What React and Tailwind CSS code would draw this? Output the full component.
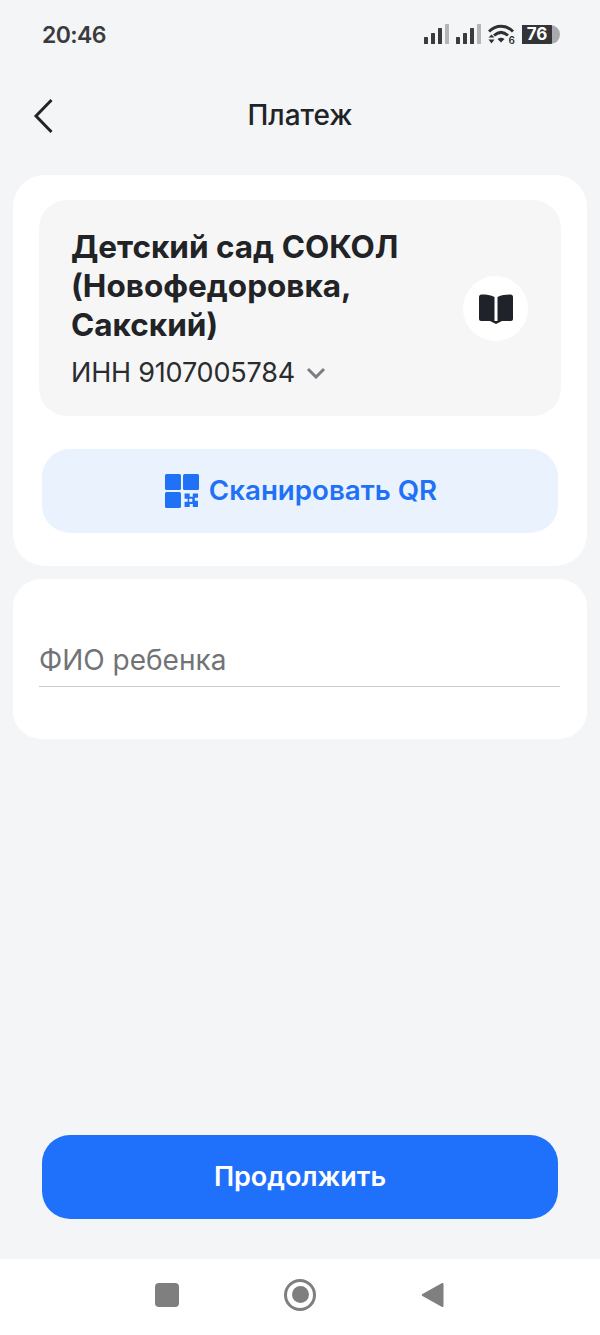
const font = { fontFamily: 'Inter, "Noto Sans", sans-serif' }

const SignalIcon = () => (
  <svg width="25" height="20" viewBox="0 0 25 20">
    <rect x="0" y="13" width="4" height="7" rx="0.5" fill="#3a3b3e" />
    <rect x="7" y="9" width="4" height="11" rx="0.5" fill="#3a3b3e" />
    <rect x="14" y="4" width="4" height="16" rx="0.5" fill="#3a3b3e" />
    <rect x="21" y="0" width="4" height="20" rx="0.5" fill="#b4b5b8" />
  </svg>
)

const WifiIcon = () => (
  <svg width="27" height="20" viewBox="0 0 27 20">
    <path d="M1 7.500C8 .5 18 .5 25 7.500" fill="none" stroke="#2f3033" strokeWidth="3" />
    <path d="M6 11.500C10.500 7.500 15.500 7.500 20 11.500" fill="none" stroke="#2f3033" strokeWidth="3" />
    <path d="M9.500 15C12 13.300 14 13.300 16.500 15L13 18.500Z" fill="#2f3033" />
    <path d="M3.500 10.500L6.500 13.500H.5ZM3.500 19.500L.5 15.500H6.500Z" fill="#2f3033" />
    <text x="20.500" y="19.500" fontSize="10" fontWeight="600" fill="#2f3033" style={font}>6</text>
  </svg>
)

const BatteryIcon = () => (
  <div className="w-[38px] h-[19px] rounded-l-[6px] rounded-r-full bg-[#a9aaad] overflow-hidden flex">
    <div className="w-[30px] bg-[#333437] flex items-center justify-center text-white text-[17px] font-bold leading-none">
      76
    </div>
  </div>
)

const QrIcon = () => (
  <svg width="34" height="34" viewBox="0 0 33 33" fill="#1f71f5">
    <rect x="0" y="0" width="15.500" height="15.500" rx="1.500" />
    <rect x="17.500" y="0" width="15.500" height="15.500" rx="1.500" />
    <rect x="0" y="17.500" width="15.500" height="15.500" rx="1.500" />
    <path d="M19 19h5v3h3v-3h5v4h-3v3h3v6h-5v-3h-3v3h-5v-5h3v-3h-3Z" />
    <rect x="23.500" y="24" width="3" height="3" fill="#eaf2fd" />
  </svg>
)

export default function App() {
  return (
    <div className="w-[600px] h-[1335px] flex flex-col bg-[#f3f5f7] text-[#212326]" style={font}>
      {/* Status bar */}
      <div className="h-[70px] pl-[42px] pr-[40px] pt-[21px] flex items-start justify-between">
        <span className="text-[23px] leading-[28px] tracking-[-0.6px] font-semibold text-[#3a3b3e]">20:46</span>
        <div className="flex items-center gap-[7px] pt-[3px]">
          <SignalIcon />
          <SignalIcon />
          <WifiIcon />
          <BatteryIcon />
        </div>
      </div>

      {/* Header */}
      <div className="h-[90px] relative flex items-center justify-center">
        <svg className="absolute left-[32px] top-[27px]" width="24" height="38" viewBox="0 0 24 38" fill="none">
          <path d="M19.500 3L4 19l15.500 16" stroke="#212326" strokeWidth="3" />
        </svg>
        <span className="text-[28px] leading-[32px] font-medium">Платеж</span>
      </div>

      <div className="flex-1 flex flex-col pt-[15px]">
        {/* Organisation card */}
        <div className="mx-[13px] h-[391px] rounded-[32px] bg-white pt-[25px] px-[26px]">
          <div className="h-[216px] rounded-[28px] bg-[#f6f6f7] pl-[32px] pr-[33px] pt-[27px] flex items-center justify-between">
            <div className="self-start">
              <div className="text-[31.5px] leading-[39px] font-bold w-[360px]">
                Детский сад СОКОЛ (Новофедоровка, Сакский)
              </div>
              <div className="mt-[11px] flex items-center gap-[11px] text-[27px] leading-[36px] tracking-[-0.2px] text-[#2a2c2f]">
                ИНН 9107005784
                <svg width="20" height="12" viewBox="0 0 20 12" fill="none">
                  <path d="M2 2l8 8 8-8" stroke="#7b7d80" strokeWidth="3" />
                </svg>
              </div>
            </div>
            <div className="w-[65px] h-[65px] rounded-full bg-white flex items-center justify-center -mt-[26px]">
              <svg width="36" height="30" viewBox="0 0 36 30" fill="#1f2329">
                <path d="M1 3C1 1.500 2 .5 3.500 .5C8 .5 13 1 16.500 3V27H3C2 27 1 26 1 25Z" />
                <path d="M35 3C35 1.500 34 .5 32.500 .5C28 .5 23 1 19.500 3V27H33C34 27 35 26 35 25Z" />
                <path d="M12 27H24L18 30Z" />
              </svg>
            </div>
          </div>
          <button className="mt-[33px] mx-[3px] w-[516px] h-[84px] pl-[2px] rounded-[28px] bg-[#eaf2fd] flex items-center justify-center gap-[10px] text-[#1f71f5] text-[27.7px] font-semibold">
            <QrIcon />
            Сканировать QR
          </button>
        </div>

        {/* Child name */}
        <div className="mt-[13px] mx-[13px] h-[160px] rounded-[28px] bg-white pl-[26px] pr-[27px] pt-[60px]">
          <div className="h-[48px] border-b border-[#c9cacc] text-[28px] leading-[42px] text-[#717376]">
            ФИО ребенка
          </div>
        </div>

        <button className="mt-auto mb-[40px] mx-[42px] h-[84px] rounded-[28px] bg-[#1f71fb] text-white text-[27px] font-semibold">
          Продолжить
        </button>
      </div>

      {/* Android nav */}
      <div className="h-[76px] bg-white flex items-center gap-[105px] pl-[155px] pb-[5px]">
        <div className="w-[24px] h-[24px] rounded-[4px] bg-[#7f7f7f]" />
        <div className="w-[32px] h-[32px] rounded-full border-[3px] border-[#7f7f7f] flex items-center justify-center">
          <div className="w-[17px] h-[17px] rounded-full bg-[#7f7f7f]" />
        </div>
        <svg width="23" height="28" viewBox="0 0 24 28" fill="#7f7f7f">
          <path d="M22 1.500C23 1.200 23.500 2 23.500 3V25C23.500 26 23 26.800 22 26.500L1.500 15C.5 14.500 .5 13.500 1.500 13Z" />
        </svg>
      </div>
    </div>
  )
}
